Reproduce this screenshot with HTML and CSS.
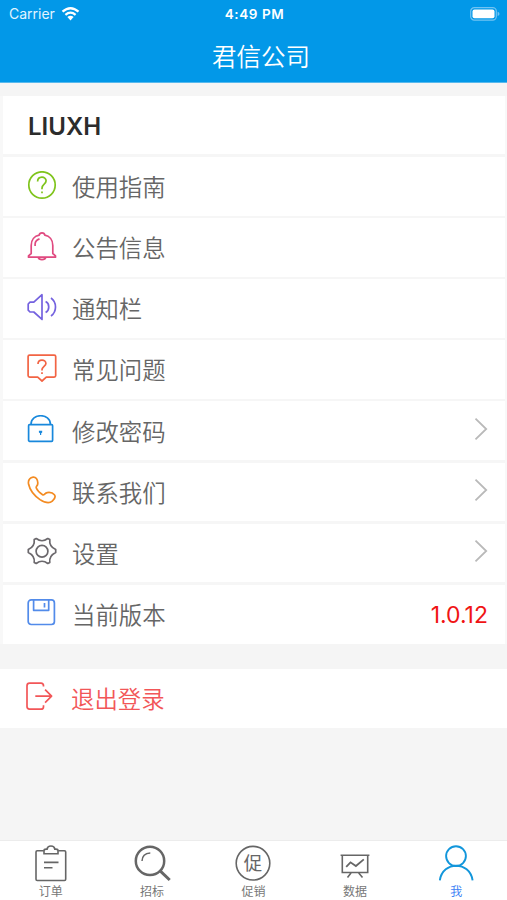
FILE: index.html
```
<!DOCTYPE html>
<html lang="zh-CN">
<head>
  <meta charset="UTF-8">
  <meta name="viewport" content="width=device-width, initial-scale=1.0">
  <title>君信公司</title>
  <link rel="stylesheet" href="styles.css">
</head>
<body>
  <header class="header">
    <div class="status-bar">
      <div class="carrier">
        <span>Carrier</span>
        <svg class="wifi" width="19" height="14" viewBox="0 0 18 14">
          <path d="M1 4.7Q9 -2.3 17 4.7M3.9 7.8Q9 3.5 14.1 7.8" fill="none" stroke="#fff" stroke-width="2.3"/>
          <path d="M5.9 10.1Q9 7.5 12.1 10.1L9 13.4Z" fill="#fff"/>
        </svg>
      </div>
      <div class="time">4:49 PM</div>
      <div class="battery">
        <svg width="30" height="14" viewBox="0 0 30 14">
          <rect x=".7" y=".7" width="25.6" height="12.4" rx="3.6" fill="none" stroke="#72c3f2" stroke-width="1.2"/>
          <rect x="2.5" y="2.5" width="22" height="8.8" rx="2" fill="#fff"/>
          <path d="M27.6 4.8Q29.5 5.4 29.5 7T27.6 9.1Z" fill="#72c3f2"/>
        </svg>
      </div>
    </div>
    <h1 class="title">君信公司</h1>
  </header>

  <main class="content">
    <ul class="list">
      <li class="row name">LIUXH</li>
      <li class="row">
        <svg class="icon green" viewBox="0 0 30 30">
          <circle cx="15" cy="14" r="13.2"/>
          <path d="M10.6 10.5C10.7 4.8 19.1 5 19.1 9.8C19.1 13.4 15 13 15 17.2V18.3M15 20.5V22.2"/>
        </svg>
        <span class="label">使用指南</span>
      </li>
      <li class="row">
        <svg class="icon pink" viewBox="0 0 30 30">
          <path d="M4.2 21.5V13.5C4.2 8 7.5 4 12.2 3.2C12.6 .2 17.4 .2 17.8 3.2C22.5 4 25.8 8 25.8 13.5V21.5L28.5 23.8V25.2H1.5V23.8ZM11.3 25.5C12 28.2 18 28.2 18.7 25.5M8.1 14V12.2C8.1 9.4 9.5 8 12.5 6.9"/>
        </svg>
        <span class="label">公告信息</span>
      </li>
      <li class="row">
        <svg class="icon purple" viewBox="0 0 30 30">
          <path d="M15 1.7V26.4L6.8 19H3L1.2 17.2V11L3 9.2H6.8ZM18.6 8.6C22.8 10.5 22.8 17.3 18.6 19.6M24 5C30 9.4 30 18.5 24 23"/>
        </svg>
        <span class="label">通知栏</span>
      </li>
      <li class="row">
        <svg class="icon orange" viewBox="0 0 30 30">
          <path d="M2.6 1.1H27.2Q28.7 1.1 28.7 2.6V21.6Q28.7 23.1 27.2 23.1H19.3L15 27L10.7 23.1H2.6Q1.1 23.1 1.1 21.6V2.6Q1.1 1.1 2.6 1.1Z"/>
          <path d="M11 9.9C11 4.9 18.9 5 18.9 9.4C18.9 12.2 15 12.6 15 15.8V16.4M15 18.2V19.9"/>
        </svg>
        <span class="label">常见问题</span>
      </li>
      <li class="row wide">
        <svg class="icon blue" viewBox="0 0 30 30">
          <rect x="1.6" y="9.7" width="24" height="16.6" rx="1"/>
          <path d="M4 9.3C4 -2.1 23.4 -2.1 23.4 9.3"/>
          <path class="solid" d="M11.9 15.7H15.2V17.4L14.2 18.2V20.1H13V18.2L11.9 17.4Z"/>
        </svg>
        <span class="label">修改密码</span>
        <svg class="chevron" viewBox="0 0 14 24"><path d="M1.5 1.7L12.2 12L1.5 22.4"/></svg>
      </li>
      <li class="row wide">
        <svg class="icon amber" viewBox="0 0 30 30">
          <path d="M2.5 3.1C4.5 .5 7.8 .4 9.4 2.5C10.8 4.4 10.9 7.1 10.6 8.5C10.2 10.2 8.7 10.5 9.3 12C10.3 14.5 13.1 17.2 15.6 18.7C17.4 19.7 17.5 17 20.2 16.6C22.5 16.3 25.9 16.8 27.4 18.7C28.9 20.7 27 23.6 25.3 25.1C22.4 27.7 17.5 26.5 13 23.6C6.8 19.4 2.8 13.6 1.6 8.3C1.2 6.3 1.4 4.4 2.5 3.1Z"/>
        </svg>
        <span class="label">联系我们</span>
        <svg class="chevron" viewBox="0 0 14 24"><path d="M1.5 1.7L12.2 12L1.5 22.4"/></svg>
      </li>
      <li class="row wide">
        <svg class="icon gray" viewBox="0 0 30 30">
          <path d="M9.2 1.5Q15 6 20.8 1.5L22.8 2.6Q21.9 9.3 28.7 12.6V15.4Q21.9 18.7 22.8 25.4L20.8 26.5Q15 22 9.2 26.5L7.2 25.4Q8.1 18.7 1.3 15.4V12.6Q8.1 9.3 7.2 2.6Z"/>
          <circle cx="15" cy="14.2" r="5.9"/>
        </svg>
        <span class="label">设置</span>
        <svg class="chevron" viewBox="0 0 14 24"><path d="M1.5 1.7L12.2 12L1.5 22.4"/></svg>
      </li>
      <li class="row last">
        <svg class="icon cobalt" viewBox="0 0 30 30">
          <rect x="1.2" y="1.9" width="26.2" height="24.6" rx="3"/>
          <path d="M6.6 2V12.3H21.7V2M17.5 5V9.5"/>
        </svg>
        <span class="label">当前版本</span>
        <span class="version">1.0.12</span>
      </li>
    </ul>

    <div class="logout">
      <svg class="icon red" viewBox="0 0 30 30">
        <path d="M17.5 4.6V3.7Q17.5 1.2 15 1.2H3.6Q1 1.2 1 3.8V24.6Q1 27.2 3.6 27.2H15Q17.5 27.2 17.5 24.7V23.2M9.3 14.2H25.5M19.1 7.7L25.6 14.2L19.1 20.6"/>
      </svg>
      <span class="label">退出登录</span>
    </div>
  </main>

  <nav class="tabs">
    <div class="tab">
      <svg viewBox="0 0 40 38">
        <path d="M12.8 5.8H6.2Q5 5.8 5 7V34.3Q5 35.5 6.2 35.5H33.5Q34.7 35.5 34.7 34.3V7Q34.7 5.8 33.5 5.8H27.2M13 17.4H27.5M13 22.8H21.5"/>
        <path d="M13 8.7V5.7Q13 4.1 15.2 4.1H16.1C16.7 0 23.2 0 23.8 4.1H24.8Q27 4.1 27 5.7V8.7Z"/>
      </svg>
      <span>订单</span>
    </div>
    <div class="tab">
      <svg viewBox="0 0 40 38">
        <circle cx="18" cy="15.9" r="14.2" stroke-width="2.5"/>
        <path d="M10 16Q10.2 8.3 18.3 7.9" stroke-width="1.5"/>
        <path d="M28.4 26.2L37.7 35" stroke-width="3"/>
      </svg>
      <span>招标</span>
    </div>
    <div class="tab">
      <svg viewBox="0 0 40 38">
        <circle cx="20" cy="18.2" r="16.8"/>
        <text x="20" y="25" text-anchor="middle">促</text>
      </svg>
      <span>促销</span>
    </div>
    <div class="tab">
      <svg viewBox="0 0 40 38">
        <path d="M5.6 10.2H34.4M7.3 10.2V27.5H32.7V10.2M16 28L12.5 32.5M23.7 28L27.5 32.5"/>
        <path d="M11.2 21.8L15.5 17.3L20.9 21L28.8 14.4" stroke-width="1.8"/>
      </svg>
      <span>数据</span>
    </div>
    <div class="tab active">
      <svg viewBox="0 0 40 38">
        <circle cx="20" cy="11.1" r="9.9"/>
        <path d="M3.8 35.3C6.8 15.8 33.6 15.8 36.6 35.3"/>
      </svg>
      <span>我</span>
    </div>
  </nav>
</body>
</html>
```

FILE: styles.css
```
* {
  box-sizing: border-box;
}
body {
  margin: 0;
  height: 900px;
  display: flex;
  flex-direction: column;
  overflow: hidden;
  font-family: Inter, "Noto Sans CJK SC", sans-serif;
  background: #f5f5f5;
  color: #666;
}
.header {
  height: 83px;
  background: #0298e8;
  border-bottom: 1px solid #58b9ed;
  color: #fff;
}
.status-bar {
  height: 27px;
  display: grid;
  grid-template-columns: 1fr auto 1fr;
  align-items: center;
  padding: 0 7px 0 9px;
  font-size: 14px;
}
.carrier {
  display: flex;
  align-items: center;
  gap: 6px;
  color: #e1f4ff;
}
.time {
  font-size: 13.5px;
  font-weight: 600;
  letter-spacing: 0.6px;
}
.battery {
  display: flex;
  justify-content: flex-end;
}
.title {
  margin: 0;
  padding-left: 15px;
  text-align: center;
  font-family: "Noto Sans CJK SC", sans-serif;
  font-size: 24.5px;
  font-weight: 350;
  line-height: 57px;
}
.content {
  flex: 1;
  padding-top: 13px;
}
.list {
  margin: 0;
  padding: 0;
  list-style: none;
  border: solid #f8f8f8;
  border-width: 0 2px 0 3px;
}
.row {
  display: flex;
  align-items: center;
  height: 61.1px;
  padding: 0 17px 0 24px;
  background: #fff;
  border-bottom: 2px solid #f6f6f6;
}
.row.wide {
  padding-top: 1px;
  border-bottom-width: 3px;
}
.row.name {
  padding-left: 25px;
  padding-top: 3px;
  border-bottom-width: 3px;
  font-size: 24px;
  font-weight: 600;
  color: #2c2c2c;
}
.row.last {
  height: 59px;
  border-bottom: 0;
}
.icon {
  width: 30px;
  height: 30px;
  margin-right: 15px;
  margin-bottom: 2px;
  fill: none;
  stroke: currentColor;
  stroke-width: 1.7;
  stroke-linejoin: round;
}
.icon .solid {
  fill: currentColor;
  stroke: none;
}
.green { color: #7fc41c; }
.pink { color: #e04a80; }
.purple { color: #7462df; }
.orange { color: #f26444; }
.blue { color: #1888dc; }
.amber { color: #f38b22; }
.gray { color: #6b686c; }
.cobalt { color: #528bea; }
.red { color: #f25658; }
.label {
  margin-bottom: 1px;
  font-family: "Noto Sans CJK SC", sans-serif;
  font-size: 23.4px;
  font-weight: 350;
  line-height: 34px;
}
.chevron {
  width: 14px;
  height: 24px;
  margin-left: auto;
  margin-bottom: 4px;
  fill: none;
  stroke: #b9b9b9;
  stroke-width: 1.8;
}
.version {
  margin-left: auto;
  padding-top: 1px;
  font-size: 23px;
  color: #f01414;
}
.logout {
  display: flex;
  align-items: center;
  height: 59px;
  margin-top: 25px;
  padding-left: 26px;
  background: #fff;
  color: #f25658;
}
.tabs {
  display: grid;
  grid-template-columns: repeat(5, 1fr);
  height: 60px;
  background: #fff;
  border-top: 1px solid #ececec;
}
.tab {
  display: flex;
  flex-direction: column;
  align-items: center;
  padding-top: 4px;
  font-family: "Noto Sans CJK SC", sans-serif;
  font-size: 12px;
  line-height: 15px;
  color: #777;
}
.tab svg {
  width: 40px;
  height: 38px;
  fill: none;
  stroke: #666;
  stroke-width: 1.6;
}
.tab svg text {
  font-size: 18.5px;
  fill: #666;
  stroke: none;
}
.tab.active {
  color: #3d82f5;
}
.tab.active svg {
  stroke: #1296db;
  stroke-width: 1.9;
}
```
